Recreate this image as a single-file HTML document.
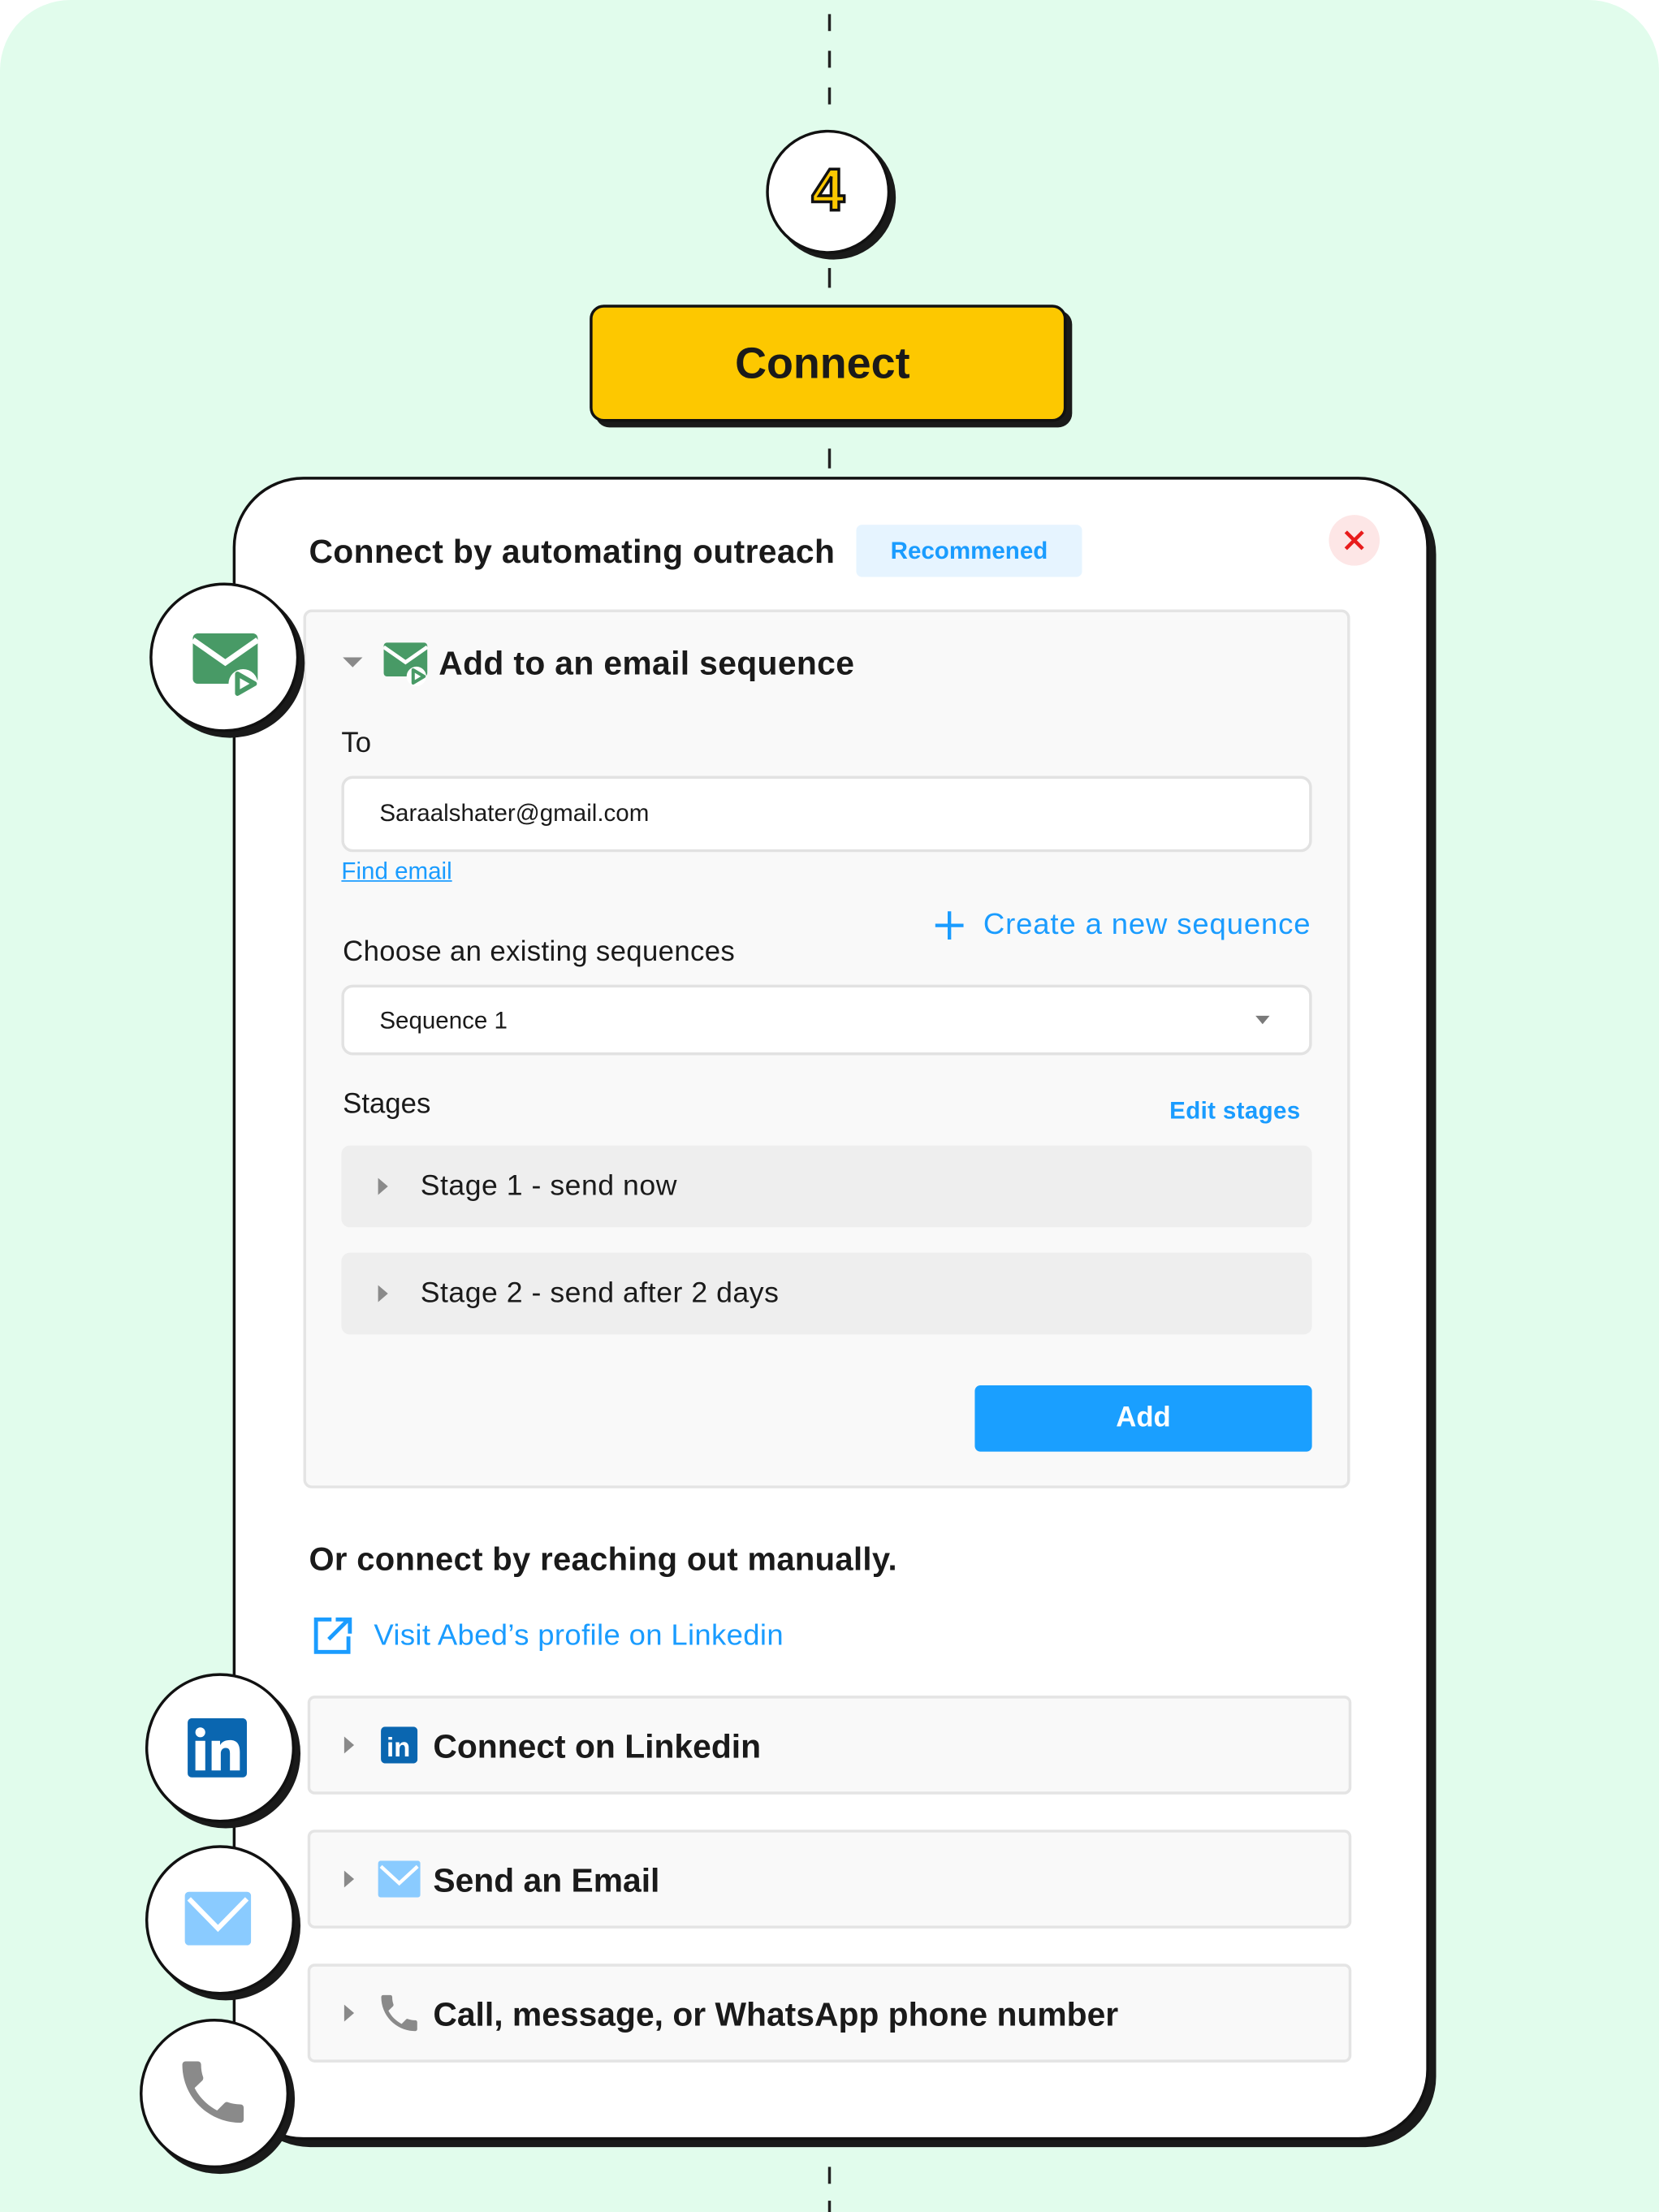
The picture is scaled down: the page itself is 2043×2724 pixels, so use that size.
<!DOCTYPE html>
<html><head><meta charset="utf-8"><style>
html,body{margin:0;padding:0;background:#fff;}
body{width:2043px;height:2724px;overflow:hidden;font-family:"Liberation Sans",sans-serif;}
#w{position:absolute;left:0;top:0;width:1176px;height:1568px;transform:scale(1.73724);transform-origin:0 0;}
.bg{position:absolute;left:0;top:0;width:1176px;height:1568px;background:#e1fcec;border-radius:50px 50px 0 0;}
.a{position:absolute;}
.dash{position:absolute;left:587px;width:2px;background:#222;}
.t{position:absolute;white-space:nowrap;color:#1a1a1a;}
.b{font-weight:bold;}
.blue{color:#1a9cff;}
.circ{position:absolute;background:#fff;border:2px solid #111;border-radius:50%;box-shadow:4px 4px 0 #1a1a1a;box-sizing:border-box;}
.row{position:absolute;left:218px;width:740px;height:70px;background:#f9f9f9;border:2px solid #e4e4e4;border-radius:5px;box-sizing:border-box;}
.caret{position:absolute;width:0;height:0;border-top:6px solid transparent;border-bottom:6px solid transparent;border-left:7px solid #8a8a8a;}
</style></head><body><div id="w">
<div class="bg"></div>
<div class="dash" style="top:10px;height:12px"></div>
<div class="dash" style="top:36px;height:12px"></div>
<div class="dash" style="top:62px;height:12px"></div>
<div class="dash" style="top:190px;height:14px"></div>
<div class="dash" style="top:318px;height:14px"></div>
<div class="dash" style="top:1536px;height:12px"></div>
<div class="dash" style="top:1560px;height:8px"></div>

<div class="circ" style="left:543px;top:92px;width:88px;height:88px;"></div>
<div class="t b" style="left:543px;top:110px;width:88px;text-align:center;font-size:42px;line-height:50px;color:#fcc800;-webkit-text-stroke:2px #111;">4</div>

<div class="a" style="left:418px;top:216px;width:338px;height:83px;background:#fdc800;border:2px solid #111;border-radius:10px;box-sizing:border-box;box-shadow:4px 4px 0 #1a1a1a;"></div>
<div class="t b" style="left:414px;top:238px;width:338px;text-align:center;font-size:31px;line-height:40px;">Connect</div>

<div class="a" style="left:165px;top:338px;width:848px;height:1179px;background:#fff;border:2px solid #111;border-radius:50px;box-sizing:border-box;box-shadow:5px 5px 0 #1a1a1a;"></div>

<div class="t b" style="left:219px;top:377px;font-size:23.5px;line-height:28px;letter-spacing:0.2px;">Connect by automating outreach</div>
<div class="a" style="left:607px;top:372px;width:160px;height:37px;background:#e6f4ff;border-radius:4px;"></div>
<div class="t b blue" style="left:607px;top:380px;width:160px;text-align:center;font-size:17px;line-height:22px;">Recommened</div>
<div class="a" style="left:942px;top:365px;width:36px;height:36px;border-radius:50%;background:#fde6e6;"></div>
<svg class="a" style="left:952px;top:375px" width="16" height="16" viewBox="0 0 16 16"><path d="M2 2L14 14M14 2L2 14" stroke="#e81c1c" stroke-width="2.6"/></svg>

<div class="a" style="left:215px;top:432px;width:742px;height:623px;background:#f9f9f9;border:2px solid #e4e4e4;border-radius:6px;box-sizing:border-box;"></div>

<div class="a" style="left:243px;top:466px;width:0;height:0;border-left:7px solid transparent;border-right:7px solid transparent;border-top:7px solid #8a8a8a;"></div>
<svg class="a" style="left:272px;top:455px" width="34" height="32" viewBox="0 0 88 80"><rect x="0" y="0" width="80" height="62" rx="6" fill="#489a66"/><path d="M0 8L40 36L80 8" stroke="#fff" stroke-width="7" fill="none"/><circle cx="60" cy="62" r="18" fill="#fff"/><path d="M54 50L74 62L54 74Z" fill="none" stroke="#489a66" stroke-width="6" stroke-linejoin="round"/></svg>
<div class="t b" style="left:311px;top:456px;font-size:23.5px;line-height:28px;letter-spacing:0.2px;">Add to an email sequence</div>

<div class="t" style="left:242px;top:515px;font-size:20px;line-height:24px;">To</div>
<div class="a" style="left:242px;top:550px;width:688px;height:54px;background:#fff;border:2px solid #e2e2e2;border-radius:8px;box-sizing:border-box;"></div>
<div class="t" style="left:269px;top:566px;font-size:17px;line-height:22px;">Saraalshater@gmail.com</div>
<div class="t blue" style="left:242px;top:607px;font-size:17px;line-height:22px;text-decoration:underline;">Find email</div>

<svg class="a" style="left:662px;top:645px" width="22" height="22" viewBox="0 0 22 22"><path d="M11 1V21M1 11H21" stroke="#1a9cff" stroke-width="2.5"/></svg>
<div class="t blue" style="left:697px;top:643px;font-size:21px;line-height:26px;letter-spacing:0.5px;">Create a new sequence</div>
<div class="t" style="left:243px;top:662px;font-size:20px;line-height:26px;letter-spacing:0.2px;">Choose an existing sequences</div>

<div class="a" style="left:242px;top:698px;width:688px;height:50px;background:#fff;border:2px solid #e2e2e2;border-radius:8px;box-sizing:border-box;"></div>
<div class="t" style="left:269px;top:713px;font-size:17px;line-height:22px;">Sequence 1</div>
<div class="a" style="left:890px;top:720px;width:0;height:0;border-left:5px solid transparent;border-right:5px solid transparent;border-top:6px solid #7a7a7a;"></div>

<div class="t" style="left:243px;top:770px;font-size:20px;line-height:26px;">Stages</div>
<div class="t b blue" style="left:829px;top:777px;font-size:17px;line-height:22px;letter-spacing:0.2px;">Edit stages</div>

<div class="a" style="left:242px;top:812px;width:688px;height:58px;background:#eeeeee;border-radius:6px;"></div>
<div class="caret" style="left:268px;top:835px;"></div>
<div class="t" style="left:298px;top:828px;font-size:20.5px;line-height:26px;letter-spacing:0.3px;">Stage 1 - send now</div>
<div class="a" style="left:242px;top:888px;width:688px;height:58px;background:#eeeeee;border-radius:6px;"></div>
<div class="caret" style="left:268px;top:911px;"></div>
<div class="t" style="left:298px;top:904px;font-size:20.5px;line-height:26px;letter-spacing:0.3px;">Stage 2 - send after 2 days</div>

<div class="a" style="left:691px;top:982px;width:239px;height:47px;background:#1a9fff;border-radius:4px;"></div>
<div class="t b" style="left:691px;top:993px;width:239px;text-align:center;color:#fff;font-size:20px;line-height:25px;">Add</div>

<div class="t b" style="left:219px;top:1091px;font-size:23px;line-height:28px;letter-spacing:0.2px;">Or connect by reaching out manually.</div>
<svg class="a" style="left:222px;top:1146px" width="28" height="27" viewBox="0 0 28 27"><path d="M13 2H2V25H25V14" stroke="#1a9cff" stroke-width="2.8" fill="none"/><path d="M11 16L25 2M16 2H26V12" stroke="#1a9cff" stroke-width="2.8" fill="none"/></svg>
<div class="t blue" style="left:265px;top:1147px;font-size:21px;line-height:26px;letter-spacing:0.2px;">Visit Abed’s profile on Linkedin</div>

<div class="row" style="top:1202px"></div>
<div class="caret" style="left:244px;top:1231px;"></div>
<svg class="a" style="left:270px;top:1224px" width="26" height="26" viewBox="0 0 26 26"><rect width="26" height="26" rx="3" fill="#0a66b0"/><text x="4" y="21" font-family="Liberation Sans" font-weight="bold" font-size="19" fill="#fff">in</text></svg>
<div class="t b" style="left:307px;top:1224px;font-size:23.5px;line-height:28px;">Connect on Linkedin</div>

<div class="row" style="top:1297px"></div>
<div class="caret" style="left:244px;top:1326px;"></div>
<svg class="a" style="left:268px;top:1319px" width="30" height="26" viewBox="0 0 30 26"><rect width="30" height="26" rx="2" fill="#8acbff"/><path d="M2 4L15 16L28 4" stroke="#fff" stroke-width="2.5" fill="none"/></svg>
<div class="t b" style="left:307px;top:1319px;font-size:23.5px;line-height:28px;">Send an Email</div>

<div class="row" style="top:1392px"></div>
<div class="caret" style="left:244px;top:1421px;"></div>
<svg class="a" style="left:266px;top:1410px" width="34" height="34" viewBox="0 0 24 24"><path d="M6.6 10.8c1.4 2.8 3.8 5.1 6.6 6.6l2.2-2.2c.3-.3.7-.4 1-.2 1.1.4 2.3.6 3.6.6.6 0 1 .4 1 1V20c0 .6-.4 1-1 1C10.6 21 3 13.4 3 4c0-.6.4-1 1-1h3.5c.6 0 1 .4 1 1 0 1.3.2 2.5.6 3.6.1.3 0 .7-.2 1L6.6 10.8z" fill="#8a8a8a"/></svg>
<div class="t b" style="left:307px;top:1414px;font-size:23.5px;line-height:28px;">Call, message, or WhatsApp phone number</div>

<div class="circ" style="left:106px;top:413px;width:106px;height:106px;"></div>
<svg class="a" style="left:136px;top:449px" width="52" height="46" viewBox="0 0 88 80"><rect x="0" y="0" width="80" height="62" rx="6" fill="#489a66"/><path d="M0 8L40 36L80 8" stroke="#fff" stroke-width="7" fill="none"/><circle cx="62" cy="62" r="18" fill="#fff"/><path d="M55 50L76 62L55 74Z" fill="none" stroke="#489a66" stroke-width="6" stroke-linejoin="round"/></svg>

<div class="circ" style="left:103px;top:1186px;width:106px;height:106px;"></div>
<svg class="a" style="left:133px;top:1218px" width="42" height="42" viewBox="0 0 42 42"><rect width="42" height="42" rx="3" fill="#0a66b0"/><circle cx="9" cy="10" r="3.5" fill="#fff"/><rect x="5.5" y="16" width="7" height="21" fill="#fff"/><path d="M17 16H23V19C24.5 16.5 27 15.5 30 15.5C35 15.5 37 18.5 37 24V37H30V25C30 22 29 21 27 21C24.5 21 23.5 23 23.5 25V37H17Z" fill="#fff"/></svg>

<div class="circ" style="left:103px;top:1308px;width:106px;height:106px;"></div>
<svg class="a" style="left:131px;top:1341px" width="47" height="38" viewBox="0 0 47 38"><rect width="47" height="38" rx="3" fill="#8acbff"/><path d="M3 5L23.5 26L44 5" stroke="#fff" stroke-width="3.5" fill="none"/></svg>

<div class="circ" style="left:99px;top:1431px;width:106px;height:106px;"></div>
<svg class="a" style="left:122px;top:1454px" width="58" height="58" viewBox="0 0 24 24"><path d="M6.6 10.8c1.4 2.8 3.8 5.1 6.6 6.6l2.2-2.2c.3-.3.7-.4 1-.2 1.1.4 2.300.6 3.6.6.6 0 1 .4 1 1V20c0 .6-.4 1-1 1C10.6 21 3 13.4 3 4c0-.6.4-1 1-1h3.5c.6 0 1 .4 1 1 0 1.3.2 2.5.6 3.6.1.3 0 .7-.2 1L6.6 10.8z" fill="#8a8a8a"/></svg>

</div></body></html>
